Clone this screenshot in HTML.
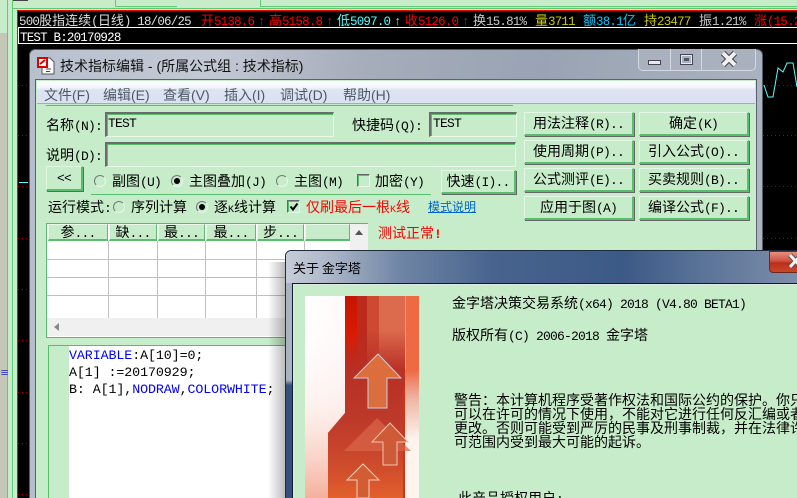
<!DOCTYPE html>
<html lang="zh">
<head>
<meta charset="utf-8">
<title>技术指标编辑</title>
<style>
html,body{margin:0;padding:0;width:797px;height:498px;overflow:hidden;background:#c7ecc9}
#r{position:relative;width:797px;height:498px;overflow:hidden}
.a{position:absolute}
.t{position:absolute;white-space:nowrap;color:#000;font:14px/16px "WenQuanYi Zen Hei","Noto Sans CJK SC",sans-serif}
.t i{font:normal 13px/16px "Liberation Mono",monospace;letter-spacing:-.8px}
.h{font-size:13px}
.h i{font-size:12.5px;letter-spacing:-.8px}
.t i.k{font-size:10px;letter-spacing:0}
.ms{font:14px/16px "Liberation Sans","WenQuanYi Zen Hei","Noto Sans CJK SC",sans-serif;color:#4d5a66}
.b{position:absolute;box-sizing:border-box;background:#c7ecc9;border-top:1px solid #e4f6e5;border-left:1px solid #e4f6e5;border-right:2px solid #58bd6c;border-bottom:2px solid #58bd6c;box-shadow:1px 1px 0 #666;text-align:center;white-space:nowrap;font:14px/21px "WenQuanYi Zen Hei","Noto Sans CJK SC",sans-serif;color:#000}
.b i{font:normal 13px/21px "Liberation Mono",monospace;letter-spacing:-.8px}
.in{position:absolute;box-sizing:border-box;border-top:2px solid #6b6b6b;border-left:2px solid #6b6b6b;border-right:1px solid #e8f8e9;border-bottom:1px solid #e8f8e9;box-shadow:inset 0 1px 0 #58bd6c,inset 1px 0 0 #58bd6c}
.ra{position:absolute;box-sizing:border-box;width:12px;height:12px;border-radius:50%;border:1px solid;border-color:#777 #e8f8e9 #e8f8e9 #777}
.ra.on:after{content:"";position:absolute;left:2px;top:2px;width:6px;height:6px;border-radius:50%;background:#000}
.ck{position:absolute;box-sizing:border-box;width:13px;height:13px;border:1px solid;border-color:#666 #e8f8e9 #e8f8e9 #666;box-shadow:inset 1px 1px 0 #58bd6c}
.th{position:absolute;top:224px;height:17px;box-sizing:border-box;background:#c7ecc9;border-top:1px solid #eaf8ea;border-left:1px solid #eaf8ea;border-right:1px solid #58bd6c;border-bottom:2px solid #58bd6c;text-align:center;font:14px/15px "WenQuanYi Zen Hei","Noto Sans CJK SC",sans-serif;white-space:nowrap;overflow:hidden}
.th i{font:normal 13px/15px "Liberation Mono",monospace;letter-spacing:-.8px}
.code{position:absolute;white-space:pre;font:13.33px/17px "Liberation Mono",monospace;letter-spacing:-.1px;color:#000}
.code b{font-weight:normal;color:#0000ff}
</style>
</head>
<body>
<div id="r">
<!-- desktop background lines -->
<div class="a" style="left:0;top:33px;width:7px;height:465px;background:#c6c6b6"></div>
<div class="a" style="left:7px;top:0;width:1px;height:498px;background:#62c873"></div>
<div class="a" style="left:12px;top:0;width:1px;height:498px;background:#62c873"></div>
<div class="a" style="left:13px;top:0;width:15px;height:1px;background:#444"></div>
<div class="a" style="left:115px;top:0;width:1px;height:6px;background:#62c873"></div>
<div class="a" style="left:260px;top:0;width:1px;height:6px;background:#62c873"></div>
<div class="a" style="left:115px;top:6px;width:62px;height:1px;background:#62c873"></div>
<div class="a" style="left:260px;top:6px;width:537px;height:1px;background:#62c873"></div>
<div class="a" style="left:13px;top:8px;width:784px;height:1px;background:#62c873"></div>
<div class="t h" style="left:0;top:366px;color:#0000c8;font-size:9px;line-height:14px">≡</div>

<!-- chart -->
<div class="a" style="left:17px;top:10px;width:780px;height:488px;background:#000;border-top:1px solid #f00;border-left:1px solid #f00;box-sizing:border-box"></div>
<div class="a" style="left:18px;top:27px;width:779px;height:17px;box-sizing:border-box;border-top:1px solid #fff;border-bottom:1px solid #fff;border-left:1px solid #fff"></div>
<div class="t h" style="left:19px;top:12px;color:#ddd"><i>500</i>股指连续<i>(</i>日线<i>) 18/06/25</i></div>
<div class="t h" style="left:201px;top:12px;color:#f00">开<i>5138.6</i></div><div class="t h" style="left:258px;top:12px;color:#f00"><i>↑</i></div>
<div class="t h" style="left:269px;top:12px;color:#f00">高<i>5158.8</i></div><div class="t h" style="left:326px;top:12px;color:#f00"><i>↑</i></div>
<div class="t h" style="left:337px;top:12px;color:#55ffff">低<i>5097.0</i></div><div class="t h" style="left:394px;top:12px;color:#55ffff"><i>↑</i></div>
<div class="t h" style="left:405px;top:12px;color:#f00">收<i>5126.0</i></div><div class="t h" style="left:462px;top:12px;color:#f00"><i>↑</i></div>
<div class="t h" style="left:473px;top:12px;color:#c8c8c8">换<i>15.81%</i></div>
<div class="t h" style="left:535px;top:12px;color:#c8c800">量<i>3711</i></div>
<div class="t h" style="left:583px;top:12px;color:#00c8ff">额<i>38.1</i>亿</div>
<div class="t h" style="left:644px;top:12px;color:#c8c800">持<i>23477</i></div>
<div class="t h" style="left:699px;top:12px;color:#c8c8c8">振<i>1.21%</i></div>
<div class="t h" style="left:754px;top:12px;color:#f00">涨<i>(15.21</i></div>
<div class="t h" style="left:20px;top:28px;color:#fff"><i>TEST B:20170928</i></div>
<svg class="a" style="left:0;top:0" width="797" height="498">
<g stroke="#a00000" stroke-width="1" stroke-dasharray="1 3">
<path d="M18 85.5H29M18 135.5H29M18 186.5H29M18 238.5H29M18 289.5H29M18 340.5H29M18 392.5H29M18 443.5H29M18 494.5H29"/>
<path d="M763 85.5H797M763 135.5H797M763 186.5H797M763 238.5H797"/>
</g>
<path d="M764 85L768 97H773L778 68L783 72L787 63H793L797 87" fill="none" stroke="#55ffff" stroke-width="1"/>
<path d="M19 182.5H28" stroke="#55ffff"/>
</svg>

<!-- main window -->
<div class="a" style="left:29px;top:49px;width:734px;height:460px;box-sizing:border-box;border:1px solid #555c68;border-radius:6px 6px 0 0;background:linear-gradient(90deg,#b6bdcc 0,#a7afbd 30%,#9aa3b2 70%,#aeb5c2 100%)"></div>
<div class="a" style="left:30px;top:50px;width:732px;height:30px;border-radius:6px 6px 0 0;background:linear-gradient(100deg,#b8c0ce 0,#c3c9d4 25%,#a6adbb 45%,#99a3b3 70%,#aab2bf 100%)"></div>
<div class="a" style="left:638px;top:49px;width:118px;height:22px;box-sizing:border-box;border:1px solid #d5dae2;border-top:0;border-radius:0 0 5px 5px;background:#a9b1be"></div>
<div class="a" style="left:670px;top:49px;width:1px;height:21px;background:#d5dae2"></div>
<div class="a" style="left:701px;top:49px;width:1px;height:21px;background:#d5dae2"></div>
<div class="a" style="left:648px;top:60px;width:13px;height:5px;box-sizing:border-box;border:1px solid #445;background:#e8e8ee"></div>
<div class="a" style="left:680px;top:54px;width:13px;height:11px;box-sizing:border-box;border:2px solid #e8ebef;outline:1px solid #445;outline-offset:-1px"></div>
<div class="a" style="left:684px;top:58px;width:5px;height:3px;background:#556"></div>
<svg class="a" style="left:720px;top:51px" width="18" height="16"><path d="M3 2L15 14M15 2L3 14" stroke="#444" stroke-width="6"/><path d="M3 2L15 14M15 2L3 14" stroke="#f0f0f0" stroke-width="4"/></svg>
<!-- title icon -->
<svg class="a" style="left:37px;top:57px" width="18" height="18"><path d="M5 1H13L17 5V17H5Z" fill="#fff" stroke="#555"/><path d="M9 12h5M9 14.5h4" stroke="#444"/><rect x="1" y="1" width="9" height="9" fill="#fff" stroke="#e00000" stroke-width="2"/><path d="M3 7L8 3" stroke="#d00" stroke-width="2"/></svg>
<div class="t" style="left:60px;top:58px;font-family:'Liberation Sans','WenQuanYi Zen Hei','Noto Sans CJK SC',sans-serif;color:#111">技术指标编辑 - (所属公式组 : 技术指标)</div>
<!-- client -->
<div class="a" style="left:36px;top:80px;width:720px;height:420px;background:#c7ecc9;outline:1px solid #5a6270"></div>
<div class="a" style="left:37px;top:81px;width:718px;height:22px;background:linear-gradient(180deg,#fff 0,#f2f4fa 30%,#dde3f2 40%,#dce2f1 100%);border-bottom:1px solid #9fb0a8"></div>
<div class="t ms" style="left:44px;top:87px">文件(F)</div>
<div class="t ms" style="left:103px;top:87px">编辑(E)</div>
<div class="t ms" style="left:163px;top:87px">查看(V)</div>
<div class="t ms" style="left:224px;top:87px">插入(I)</div>
<div class="t ms" style="left:280px;top:87px">调试(D)</div>
<div class="t ms" style="left:343px;top:87px">帮助(H)</div>
<div class="a" style="left:46px;top:105px;width:467px;height:1px;background:#58bd6c"></div>

<!-- form -->
<div class="t" style="left:46px;top:117px">名称<i>(N):</i></div>
<div class="in" style="left:105px;top:112px;width:229px;height:25px"></div>
<div class="t" style="left:108px;top:114px"><i>TEST</i></div>
<div class="t" style="left:352px;top:117px">快捷码<i>(Q):</i></div>
<div class="in" style="left:429px;top:112px;width:88px;height:25px"></div>
<div class="t" style="left:433px;top:114px"><i>TEST</i></div>
<div class="t" style="left:46px;top:147px">说明<i>(D):</i></div>
<div class="in" style="left:105px;top:142px;width:411px;height:25px"></div>
<div class="b" style="left:46px;top:166px;width:37px;height:25px;line-height:20px"><i>&lt;&lt;</i></div>
<div class="ra" style="left:94px;top:175px"></div>
<div class="t" style="left:112px;top:173px">副图<i>(U)</i></div>
<div class="ra on" style="left:171px;top:175px"></div>
<div class="t" style="left:189px;top:173px">主图叠加<i>(J)</i></div>
<div class="ra" style="left:276px;top:175px"></div>
<div class="t" style="left:294px;top:173px">主图<i>(M)</i></div>
<div class="ck" style="left:357px;top:174px"></div>
<div class="t" style="left:375px;top:173px">加密<i>(Y)</i></div>
<div class="b" style="left:441px;top:170px;width:75px;height:24px">快速<i>(I)..</i></div>
<div class="a" style="left:91px;top:194px;width:340px;height:1px;background:#58bd6c"></div>
<div class="t" style="left:48px;top:199px">运行模式<i>:</i></div>
<div class="ra" style="left:113px;top:201px"></div>
<div class="t" style="left:131px;top:199px">序列计算</div>
<div class="ra on" style="left:196px;top:201px"></div>
<div class="t" style="left:214px;top:199px">逐<i class="k">K</i>线计算</div>
<div class="ck" style="left:287px;top:200px"></div>
<svg class="a" style="left:288px;top:201px" width="12" height="12"><path d="M2.5 5.5L5 8.5L9.5 2.5" fill="none" stroke="#000" stroke-width="2"/></svg>
<div class="t" style="left:306px;top:199px;color:#f00">仅刷最后一根<i class="k">K</i>线</div>
<div class="t" style="left:428px;top:199px;color:#0066cc;font-size:12px;text-decoration:underline">模式说明</div>

<!-- table -->
<div class="a" style="left:46px;top:223px;width:322px;height:115px;box-sizing:border-box;border:1px solid #58bd6c;border-right:0;background:#fff"></div>
<div class="th" style="left:48px;width:60px">参<i>...</i></div>
<div class="th" style="left:109px;width:48px">缺<i>...</i></div>
<div class="th" style="left:158px;width:47px">最<i>...</i></div>
<div class="th" style="left:206px;width:50px">最<i>...</i></div>
<div class="th" style="left:257px;width:47px">步<i>...</i></div>
<div class="th" style="left:305px;width:45px"></div>
<svg class="a" style="left:47px;top:241px" width="303" height="77">
<path d="M0 18.5H303M0 36.5H303M0 54.5H303M61.5 0V77M110.5 0V77M158.5 0V77M209.5 0V77M257.5 0V77" stroke="#c0c0c0" stroke-width="1"/>
</svg>
<div class="a" style="left:350px;top:224px;width:18px;height:94px;background:#f0f0f0"></div>
<svg class="a" style="left:354px;top:229px" width="10" height="7"><path d="M1 6L5 1L9 6Z" fill="#555"/></svg>
<div class="a" style="left:47px;top:318px;width:321px;height:18px;background:#f0f0f0"></div>
<svg class="a" style="left:53px;top:322px" width="7" height="10"><path d="M6 1L1 5L6 9Z" fill="#888"/></svg>
<div class="t" style="left:378px;top:225px;color:#f00">测试正常<i style="font-weight:bold">!</i></div>

<!-- buttons right -->
<div class="b" style="left:524px;top:112px;width:110px;height:24px">用法注释<i>(R)..</i></div>
<div class="b" style="left:639px;top:112px;width:110px;height:24px">确定<i>(K)</i></div>
<div class="b" style="left:524px;top:140px;width:110px;height:24px">使用周期<i>(P)..</i></div>
<div class="b" style="left:639px;top:140px;width:110px;height:24px">引入公式<i>(O)..</i></div>
<div class="b" style="left:524px;top:168px;width:110px;height:24px">公式测评<i>(E)..</i></div>
<div class="b" style="left:639px;top:168px;width:110px;height:24px">买卖规则<i>(B)..</i></div>
<div class="b" style="left:524px;top:196px;width:110px;height:24px">应用于图<i>(A)</i></div>
<div class="b" style="left:639px;top:196px;width:110px;height:24px">编译公式<i>(F)..</i></div>

<!-- editor -->
<div class="a" style="left:48px;top:345px;width:250px;height:153px;box-sizing:border-box;border-top:1px solid #58bd6c;border-left:1px solid #58bd6c;background:#fff"></div>
<div class="a" style="left:49px;top:346px;width:20px;height:152px;background:#c7ecc9"></div>
<div class="code" style="left:69px;top:348px"><b>VARIABLE</b>:A[10]=0;
A[1] :=20170929;
B: A[1],<b>NODRAW</b>,<b>COLORWHITE</b>;</div>

<!-- about window -->
<div class="a" style="left:268px;top:262px;width:18px;height:236px;background:linear-gradient(90deg,rgba(0,0,0,0),rgba(0,0,0,.28))"></div>
<div class="a" style="left:285px;top:250px;width:530px;height:260px;box-sizing:border-box;border:1px solid #1f2a3a;border-radius:6px 6px 0 0;background:linear-gradient(180deg,#aab3c2 0,#aab3c2 50%,#35507c 52%,#35507c 100%)"></div>
<div class="a" style="left:286px;top:251px;width:520px;height:32px;border-radius:5px 0 0 0;background:linear-gradient(90deg,#c6ccd8 0,#aeb8c8 8%,#6f85a5 22%,#47638e 40%,#3c5a86 65%,#5a7398 80%,#8090aa 100%)"></div>
<div class="t" style="left:293px;top:260px;font-size:13px;color:#000">关于 金字塔</div>
<div class="a" style="left:292px;top:283px;width:520px;height:220px;box-sizing:border-box;background:#c7ecc9;border-top:1px solid #101a2a;border-left:1px solid #101a2a;box-shadow:inset 1px 1px 0 #e0e8e4"></div>
<div class="a" style="left:769px;top:251px;width:40px;height:22px;box-sizing:border-box;border:1px solid #6a2820;border-radius:0 0 4px 4px;background:linear-gradient(180deg,#e89080 0,#d05040 45%,#b8301c 55%,#c84828 100%)"></div>
<svg class="a" style="left:787px;top:253px" width="10" height="16"><path d="M3 2L14 14M14 2L3 14" stroke="#555" stroke-width="5"/><path d="M3 2L14 14M14 2L3 14" stroke="#f4f4f4" stroke-width="3"/></svg>

<!-- picture -->
<svg class="a" style="left:305px;top:296px" width="114" height="202" viewBox="305 296 114 202">
<defs>
<linearGradient id="w" x1="0" x2="1" y1="0" y2="0"><stop offset="0" stop-color="#fff"/><stop offset=".5" stop-color="#fff6f6"/><stop offset="1" stop-color="#f2d8d8"/></linearGradient>
<linearGradient id="wb" x1="0" x2="0" y1="0" y2="1"><stop offset="0" stop-color="#fff" stop-opacity="0"/><stop offset=".55" stop-color="#fbe4dd" stop-opacity=".5"/><stop offset="1" stop-color="#f6b09c"/></linearGradient>
<linearGradient id="rb" gradientUnits="userSpaceOnUse" x1="0" x2="0" y1="296" y2="498"><stop offset="0" stop-color="#b82f24" stop-opacity="0"/><stop offset=".17" stop-color="#b82f24" stop-opacity="0"/><stop offset=".36" stop-color="#b82f24" stop-opacity=".95"/><stop offset=".62" stop-color="#bd3a2a"/><stop offset=".85" stop-color="#cf4c2c"/><stop offset="1" stop-color="#e2602c"/></linearGradient>
<linearGradient id="rs" gradientUnits="userSpaceOnUse" x1="0" x2="0" y1="296" y2="370"><stop offset="0" stop-color="#c41600"/><stop offset=".6" stop-color="#de1a00"/><stop offset="1" stop-color="#c02010"/></linearGradient>
<linearGradient id="es" gradientUnits="userSpaceOnUse" x1="0" x2="0" y1="370" y2="440"><stop offset="0" stop-color="#ee6a42"/><stop offset=".4" stop-color="#edb4a4"/><stop offset="1" stop-color="#fff4ee"/></linearGradient>
</defs>
<rect x="305" y="296" width="114" height="202" fill="url(#w)"/>
<rect x="305" y="296" width="40" height="202" fill="url(#wb)"/>
<path d="M345 296H405V498H328V433L345 413Z" fill="#c43020"/>
<rect x="345" y="296" width="12" height="90" fill="url(#rs)"/>
<rect x="357" y="296" width="10" height="80" fill="#bb2a1c"/>
<rect x="367" y="296" width="12" height="80" fill="#cc4a30"/>
<rect x="379" y="296" width="26" height="80" fill="#dc6a4c"/>
<rect x="405" y="296" width="14" height="202" fill="url(#es)"/>
<rect x="405" y="296" width="1" height="74" fill="#f2987c"/>
<path d="M345 296H405V498H328V433L345 413Z" fill="url(#rb)"/>
<rect x="403" y="390" width="2" height="108" fill="#d83010"/>
<path d="M377 418L411 451H344Z" fill="#d8664a" opacity=".7"/>
<path d="M378 354L401 378H387V408H368V378H354Z" fill="#dc6e3e" stroke="#c5d0e4" stroke-width="1"/>
<path d="M390 423L408 442H397V465H383V442H372Z" fill="#cf5a38" stroke="#f0c4b0" stroke-width="1"/>
<path d="M363 464L379 480H369V498H357V480H347Z" fill="#d25c34" stroke="#f6d0bc" stroke-width="1"/>
</svg>

<!-- about text -->
<div class="t" style="left:452px;top:295px">金字塔决策交易系统<i>(x64) 2018 (V4.80 BETA1)</i></div>
<div class="t" style="left:452px;top:327px">版权所有<i>(C) 2006-2018 </i>金字塔</div>
<div class="t" style="left:454px;top:392px">警告：本计算机程序受著作权法和国际公约的保护。你只</div>
<div class="t" style="left:454px;top:406px">可以在许可的情况下使用，不能对它进行任何反汇编或者</div>
<div class="t" style="left:454px;top:420px">更改。否则可能受到严厉的民事及刑事制裁，并在法律许</div>
<div class="t" style="left:454px;top:434px">可范围内受到最大可能的起诉。</div>
<div class="t" style="left:458px;top:490px">此产品授权用户<i>:</i></div>
</div>
</body>
</html>
